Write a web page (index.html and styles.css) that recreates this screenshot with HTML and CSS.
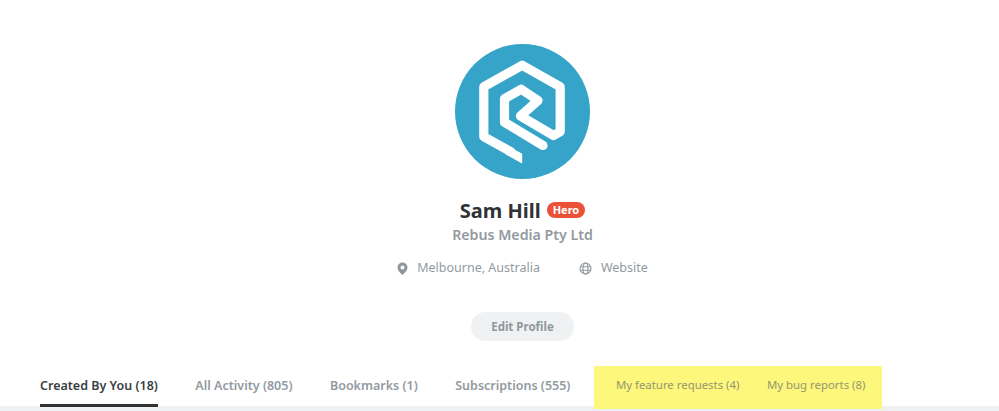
FILE: index.html
```html
<!DOCTYPE html>
<html lang="en">
<head>
    <meta charset="UTF-8">
    <title>Sam Hill</title>
    <link rel="stylesheet" href="styles.css">
</head>
<body>
    <div class="profile">
        <div class="avatar">
            <svg width="135" height="135" viewBox="0 0 135 135">
                <path class="logo-line" d="M56 107.800 L28.800 92.800 L28.800 42.800 L67.200 21.200 L105.200 42.800 L105.200 87.800 L98.500 91.500 L65.500 72 L83 56.500 L66.200 45.200 L49.500 54.800 L49.500 78.200 L88 101.500"/>
                <polygon class="logo-tail" points="67.200,109.800 67.200,119.500 50,110 50,100.400"/>
            </svg>
        </div>
        <div class="name-row">
            <span class="name">Sam Hill</span>
            <span class="badge">Hero</span>
        </div>
        <div class="company">Rebus Media Pty Ltd</div>
        <div class="meta">
            <span class="meta-item">
                <svg width="11" height="13" viewBox="0 0 11 13"><path fill="#8f979e" fill-rule="evenodd" d="M5.500 0.500a5 5 0 0 1 5 5c0 3-3 5.500-5 7.500c-2-2-5-4.500-5-7.500a5 5 0 0 1 5-5zM5.500 3.500a2 2 0 1 0 0 4a2 2 0 1 0 0-4z"/></svg>
                Melbourne, Australia
            </span>
            <span class="meta-item">
                <svg width="13" height="13" viewBox="0 0 13 13" fill="none" stroke="#8f979e" stroke-width="1.100"><circle cx="6.500" cy="6.500" r="5.500"/><ellipse cx="6.500" cy="6.500" rx="2.500" ry="5.500"/><path d="M1.200 4.700h10.600M1.200 8.300h10.600"/></svg>
                Website
            </span>
        </div>
        <a class="edit-btn" href="#">Edit Profile</a>
    </div>
    <div class="tabs">
        <a class="tab active" href="#">Created By You (18)</a>
        <a class="tab" href="#">All Activity (805)</a>
        <a class="tab" href="#">Bookmarks (1)</a>
        <a class="tab" href="#">Subscriptions (555)</a>
        <div class="highlight">
            <a class="tab" href="#">My feature requests (4)</a>
            <a class="tab" href="#">My bug reports (8)</a>
        </div>
    </div>
</body>
</html>
```
FILE: styles.css
```css
* {
    margin: 0;
    padding: 0;
    box-sizing: border-box;
}
body {
    height: 411px;
    overflow: hidden;
    background-color: #fff;
    font-family: "Noto Sans", "Open Sans", sans-serif;
}
.profile {
    display: flex;
    flex-direction: column;
    align-items: center;
    padding-top: 44px;
    padding-left: 46px;
    height: 365px;
}
.avatar {
    width: 135px;
    height: 135px;
    border-radius: 50%;
    background-color: #36a4c9;
}
.avatar svg {
    display: block;
}
.logo-line {
    fill: none;
    stroke: #fff;
    stroke-width: 9.200;
    stroke-linejoin: round;
    stroke-linecap: round;
}
.logo-tail {
    fill: #fff;
}
.name-row {
    display: flex;
    align-items: center;
    gap: 6px;
    margin-top: 17px;
    height: 28px;
}
.name {
    font-size: 20px;
    font-weight: 700;
    color: #2f3336;
}
.badge {
    background-color: #ea5138;
    color: #fff;
    font-size: 11px;
    font-weight: 700;
    line-height: 16px;
    padding: 0 6px;
    border-radius: 8px;
}
.company {
    margin-top: 1px;
    font-size: 14.200px;
    font-weight: 600;
    color: #929aa1;
    line-height: 20px;
}
.meta {
    display: flex;
    gap: 39px;
    margin-top: 14px;
    font-size: 12.500px;
    color: #929aa1;
    line-height: 18px;
}
.meta-item {
    display: flex;
    align-items: center;
    gap: 9px;
}
.edit-btn {
    margin-top: 35px;
    width: 103px;
    height: 29px;
    border-radius: 15px;
    background-color: #f0f1f3;
    color: #8f979e;
    font-size: 11.500px;
    font-weight: 700;
    line-height: 29px;
    text-align: center;
    text-decoration: none;
}
.tabs {
    display: flex;
    align-items: flex-start;
    height: 46px;
    padding-left: 40px;
    gap: 37.500px;
    border-bottom: 5px solid #eff0f2;
}
.tab {
    display: block;
    height: 42px;
    padding-top: 12px;
    font-size: 12.500px;
    font-weight: 600;
    color: #929aa1;
    text-decoration: none;
    white-space: nowrap;
}
.tab.active {
    color: #3a3e42;
    border-bottom: 3px solid #2f3336;
}
.highlight {
    display: flex;
    gap: 27.500px;
    height: 43px;
    margin-top: 1px;
    margin-left: -14px;
    padding: 0 17px 0 22px;
    background-color: #fdf77b;
}
.highlight .tab {
    height: 43px;
    padding-top: 11px;
    font-size: 11.400px;
    font-weight: 400;
    color: #959670;
}
```
